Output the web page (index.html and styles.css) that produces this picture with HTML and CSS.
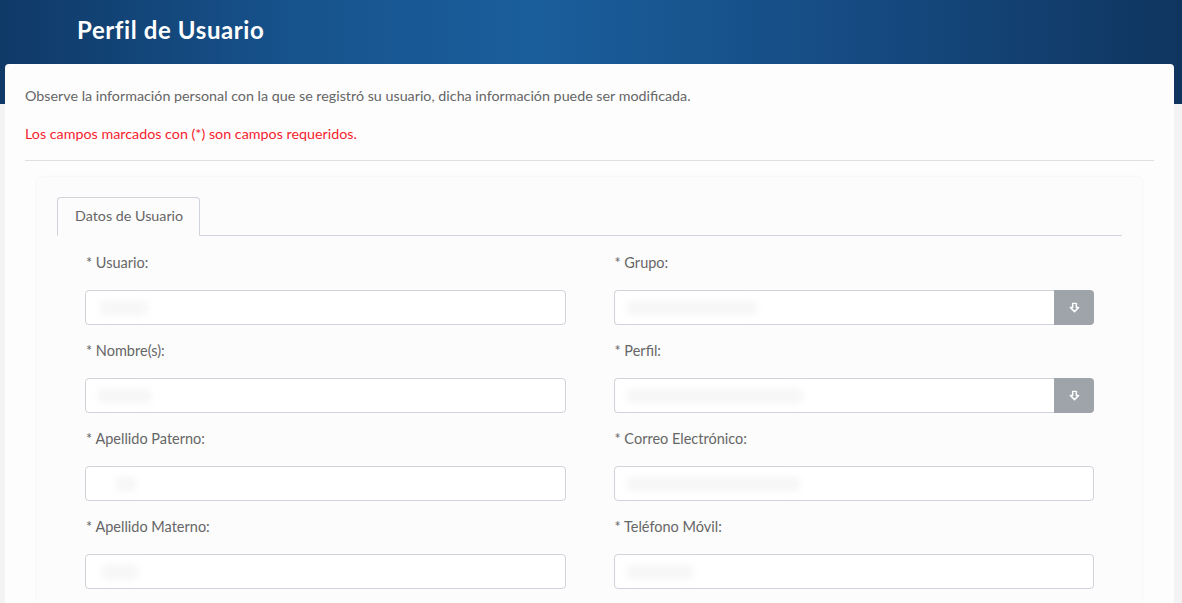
FILE: index.html
```html
<!DOCTYPE html>
<html lang="es">
<head>
  <meta charset="UTF-8" />
  <meta name="viewport" content="width=device-width, initial-scale=1.0"/>
  <title>Perfil de Usuario</title>
  <link rel="stylesheet" href="styles.css">
</head>
<body>

  <!-- Header -->
  <div class="page-header">
    <h1>Perfil de Usuario</h1>
  </div>

  <div class="card">
    <p class="intro">Observe la información personal con la que se registró su usuario, dicha información puede ser modificada.</p>
    <p class="required-note">Los campos marcados con (*) son campos requeridos.</p>
    <hr />

    <div class="panel">
      <ul class="tabs">
        <li class="tab active">Datos de Usuario</li>
      </ul>

      <form class="profile-form">
        <div class="form-group">
          <label for="usuario">* Usuario:</label>
          <div class="field"><input type="text" id="usuario" /><span class="blur" style="left:14px;width:50px"></span></div>
        </div>
        <div class="form-group">
          <label for="grupo">* Grupo:</label>
          <div class="input-group">
            <div class="field"><input type="text" id="grupo" /><span class="blur" style="left:12px;width:132px"></span></div>
            <button type="button" class="addon">
              <svg width="11" height="11" viewBox="0 0 12 12"><path d="M4 1.5h4v4.5h2.5L6 10.5 1.5 6H4z" fill="none" stroke="#fff" stroke-width="1.6" stroke-linejoin="round"/></svg>
            </button>
          </div>
        </div>

        <div class="form-group">
          <label for="nombre">* Nombre(s):</label>
          <div class="field"><input type="text" id="nombre" /><span class="blur" style="left:12px;width:55px"></span></div>
        </div>
        <div class="form-group">
          <label for="perfil">* Perfil:</label>
          <div class="input-group">
            <div class="field"><input type="text" id="perfil" /><span class="blur" style="left:12px;width:178px"></span></div>
            <button type="button" class="addon">
              <svg width="11" height="11" viewBox="0 0 12 12"><path d="M4 1.5h4v4.5h2.5L6 10.5 1.5 6H4z" fill="none" stroke="#fff" stroke-width="1.6" stroke-linejoin="round"/></svg>
            </button>
          </div>
        </div>

        <div class="form-group">
          <label for="paterno">* Apellido Paterno:</label>
          <div class="field"><input type="text" id="paterno" /><span class="blur" style="left:30px;width:22px"></span></div>
        </div>
        <div class="form-group">
          <label for="correo">* Correo Electrónico:</label>
          <div class="field"><input type="text" id="correo" /><span class="blur" style="left:12px;width:175px"></span></div>
        </div>

        <div class="form-group">
          <label for="materno">* Apellido Materno:</label>
          <div class="field"><input type="text" id="materno" /><span class="blur" style="left:16px;width:38px"></span></div>
        </div>
        <div class="form-group">
          <label for="movil">* Teléfono Móvil:</label>
          <div class="field"><input type="text" id="movil" /><span class="blur" style="left:12px;width:68px"></span></div>
        </div>
      </form>
    </div>
  </div>

</body>
</html>
```

FILE: styles.css
```css
body {
  font-family: Lato, "Noto Sans", Arial, sans-serif;
  background: #f3f3f3;
  margin: 0;
  padding: 0;
  color: #666;
}
.page-header {
  height: 104px;
  box-sizing: border-box;
  padding: 14px 0 0 77px;
  background: linear-gradient(90deg, #0f3967 0%, #17538d 25%, #1a5e9c 45%, #15497f 75%, #0f355f 100%);
}
.page-header h1 {
  margin: 0;
  color: #fff;
  font-size: 24px;
  letter-spacing: 0.6px;
  font-weight: bold;
  line-height: 32px;
}
.card {
  margin: -40px 8px 0 5px;
  background: #fdfdfd;
  border-radius: 4px;
  padding: 20px 20px 0 20px;
  min-height: 540px;
}
.intro {
  margin: 0;
  font-size: 14.3px;
  line-height: 24px;
  color: #666;
}
.required-note {
  margin: 14px 0 0;
  font-size: 14.3px;
  line-height: 24px;
  color: #f5222d;
}
hr {
  border: none;
  border-top: 1px solid #e0e0e0;
  margin: 14px 0 16px;
}
.panel {
  margin: 0 12px;
  background: #fcfcfc;
  box-shadow: 0 0 3px rgba(0, 0, 0, 0.06);
  border-radius: 4px;
  padding: 20px 20px 0 20px;
  min-height: 400px;
}
.tabs {
  list-style: none;
  margin: 0;
  padding: 0;
  display: flex;
  border-bottom: 1px solid #cfd3da;
}
.tab {
  font-size: 14.3px;
  line-height: 20px;
  padding: 8px 16px 9px 17px;
  margin-bottom: -1px;
  color: #666;
}
.tab.active {
  border: 1px solid #cfd3da;
  border-bottom-color: #fcfcfc;
  border-radius: 4px 4px 0 0;
  background: #fcfcfc;
}
.profile-form {
  display: grid;
  grid-template-columns: 1fr 1fr;
  column-gap: 48px;
  padding: 16px 28px 0 28px;
}
.form-group {
  margin-bottom: 15px;
}
label {
  display: block;
  font-size: 14.5px;
  line-height: 22px;
  margin: 0 0 16px 1px;
  color: #666;
}
.field {
  position: relative;
  flex: 1;
}
input {
  width: 100%;
  height: 35px;
  box-sizing: border-box;
  border: 1px solid #cfd3da;
  border-radius: 4px;
  background: #fff;
  padding: 6px 12px;
  font-size: 14px;
  display: block;
}
.blur {
  position: absolute;
  top: 10px;
  height: 16px;
  background: #f7f7f8;
  border-radius: 8px;
  filter: blur(3px);
}
.input-group {
  display: flex;
}
.input-group input {
  border-radius: 4px 0 0 4px;
  border-right: none;
}
.addon {
  width: 40px;
  height: 35px;
  border: none;
  background: #9fa4ab;
  border-radius: 0 4px 4px 0;
  display: flex;
  align-items: center;
  justify-content: center;
  padding: 0;
  cursor: pointer;
}
```
